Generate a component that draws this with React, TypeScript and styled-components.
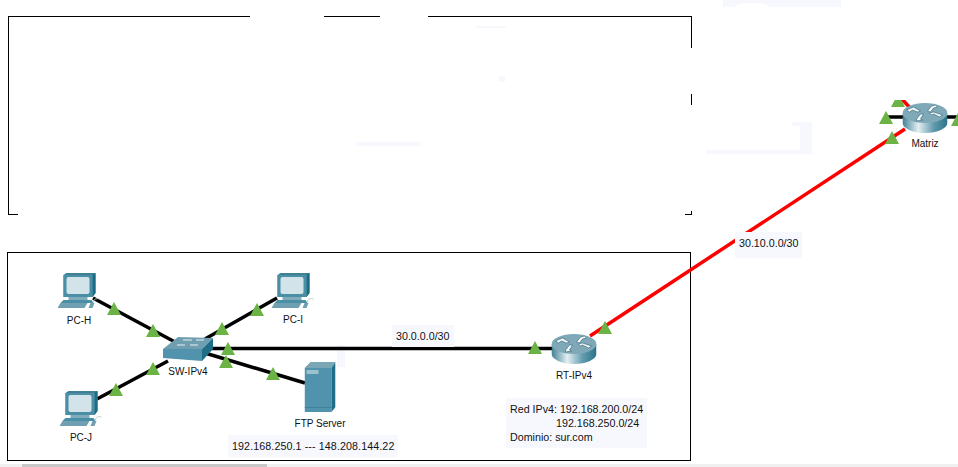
import { useId } from "react"
import styled, { createGlobalStyle } from "styled-components"

const GlobalStyle = createGlobalStyle`
    html, body {
        margin: 0;
        padding: 0;
        background: #fff;
        overflow: hidden;
    }
    body {
        font-family: "Liberation Sans", Arial, sans-serif;
        font-size: 10.7px;
        color: #111;
    }
`

const links = [
    { x1: 93, y1: 298, x2: 175, y2: 342, color: "#000" },
    { x1: 277, y1: 298, x2: 205, y2: 339, color: "#000" },
    { x1: 97, y1: 399, x2: 168, y2: 361, color: "#000" },
    { x1: 210, y1: 348.5, x2: 555, y2: 348.5, color: "#000" },
    { x1: 205, y1: 353, x2: 305, y2: 383, color: "#000" },
    { x1: 590, y1: 336, x2: 905, y2: 129, color: "#f00" },
    { x1: 888, y1: 117, x2: 905, y2: 117, color: "#000" },
    { x1: 945, y1: 117, x2: 958, y2: 117, color: "#000" },
    { x1: 900, y1: 97, x2: 912, y2: 110, color: "#f00" },
]

// x is the middle of the triangle, y its top
const lights = [
    [114, 302], [153, 324], [257, 303], [222, 322], [228, 342], [226, 355],
    [273, 367], [153, 362], [116, 383], [535, 341], [605, 321],
    [898, 94], [886, 111], [892, 131], [958, 113],
]

const smudges = [
    { x: 723, y: 0, w: 118, h: 7, c: "#f7f8fe" },
    { x: 735, y: 3, w: 34, h: 8, c: "#fff", round: true },
    { x: 706, y: 150, w: 106, h: 4, c: "#f7f8fe" },
    { x: 800, y: 122, w: 12, h: 32, c: "#f7f8fe" },
    { x: 792, y: 122, w: 10, h: 4, c: "#f7f8fe" },
    { x: 357, y: 142, w: 63, h: 4, c: "#f7f8fe" },
    { x: 476, y: 26, w: 30, h: 2, c: "#f7f8fe" },
    { x: 499, y: 76, w: 6, h: 6, c: "#f7f8fe" },
    { x: 337, y: 345, w: 8, h: 22, c: "#f7f8fe" },
    // parts of the first region that got painted over
    { x: 250, y: 14, w: 74, h: 5, c: "#fff" },
    { x: 380, y: 14, w: 48, h: 5, c: "#fff" },
    { x: 690, y: 48, w: 4, h: 46, c: "#fff" },
    { x: 690, y: 105, w: 4, h: 106, c: "#fff" },
    { x: 18, y: 213, w: 667, h: 5, c: "#fff" },
]

function PcIcon() {
    return (
        <svg width="43" height="35" viewBox="0 0 43 35">
            <polygon points="6,2 9,0 38,0 38,20 35,24 6,24" fill="#3f8095" />
            <polygon points="35,2 38,0 38,20 35,24" fill="#1d6c85" />
            <rect x="6" y="2" width="29" height="22" fill="#4b8fa6" />
            <rect x="9" y="4" width="23" height="17" rx="2" fill="#d3e3ea" />
            <rect x="11" y="24" width="19" height="3" fill="#7fabbb" />
            <polygon points="6,27 34,27 36,30 3,30" fill="#4b8fa6" />
            <polygon points="3,30 30,30 27,35 0,35" fill="#6f9fb1" />
            <polygon points="31,35 33,30 37,30 35,35" fill="#6f9fb1" />
            <path d="M36 29c0-3 3-4 6-3" fill="none" stroke="#b9c9d0" />
        </svg>
    )
}

function SwitchIcon() {
    return (
        <svg width="50" height="24" viewBox="0 0 50 24">
            <polygon points="0,12 15,0 50,1 39,12" fill="#6f9eb0" />
            <polygon points="0,12 39,12 39,24 0,21" fill="#5193ac" />
            <polygon points="39,12 50,1 50,12 39,24" fill="#1f6e87" />
            <g stroke="#e8f1f4" strokeWidth="1.2" fill="none">
                <path d="M20 3h9M33 3h8M14 8h8M27 8h8" />
            </g>
        </svg>
    )
}

function ServerIcon() {
    return (
        <svg width="31" height="50" viewBox="0 0 31 50">
            <polygon points="0,6 6,0 31,0 27,6" fill="#7ba6b6" />
            <rect x="0" y="6" width="27" height="44" fill="#5193ac" />
            <polygon points="27,6 31,0 31,45 27,50" fill="#1d6f87" />
            <rect x="2" y="8" width="12" height="4" fill="#9cc1cf" />
            <rect x="0" y="45" width="27" height="1" fill="#3f8199" />
        </svg>
    )
}

function RouterIcon() {
    const id = useId()
    return (
        <svg width="45" height="30" viewBox="0 0 45 30">
            <defs>
                <linearGradient id={id}>
                    <stop offset="0" stopColor="#3e8095" />
                    <stop offset="0.35" stopColor="#e4eff2" />
                    <stop offset="0.7" stopColor="#5f9aac" />
                    <stop offset="1" stopColor="#2b7389" />
                </linearGradient>
            </defs>
            <path d="M0 10v10c0 5 10 10 22.500 10s22.500-5 22.500-10v-10z" fill={`url(#${id})`} />
            <ellipse cx="22.500" cy="10" rx="22.500" ry="10" fill="#7fa9b8" />
            <g fill="#f2f7f8" stroke="#174f62" strokeWidth="0.5">
                <polygon points="4,7 11,4 18,8 15,9 10,7 7,9" />
                <polygon points="25,8 29,3 33,2 35,4 31,5 28,9" />
                <polygon points="27,10 31,9 40,12 37,14 31,11 29,12" />
                <polygon points="14,16 18,11 21,11 18,16 20,17 14,18" />
            </g>
        </svg>
    )
}

export default function App() {
    return (
        <Canvas>
            <GlobalStyle />

            <Region $x={8} $y={16} $w={684} $h={199} />
            <Region $x={7} $y={252} $w={684} $h={209} />

            {smudges.map(s => (
                <Smudge key={`${s.x}-${s.y}`} $x={s.x} $y={s.y} $w={s.w} $h={s.h} $color={s.c} $round={s.round} />
            ))}

            <LinkLayer width="958" height="467">
                {links.map(l => (
                    <line key={`${l.x1}-${l.y1}`} x1={l.x1} y1={l.y1} x2={l.x2} y2={l.y2} stroke={l.color} strokeWidth="3.5" />
                ))}
            </LinkLayer>

            <LinkNote $x={392} $y={325}>30.0.0.0/30</LinkNote>
            <LinkNote $x={735} $y={232} $tall>30.10.0.0/30</LinkNote>
            <LinkNote $x={228} $y={435} $spread>192.168.250.1 --- 148.208.144.22</LinkNote>
            <LinkNote $x={506} $y={398}>
                <div>Red IPv4: 192.168.200.0/24</div>
                <IndentedLine>192.168.250.0/24</IndentedLine>
                <div>Dominio: sur.com</div>
            </LinkNote>

            <Device $x={79} $y={273} $gap={7}><PcIcon /><DeviceName>PC-H</DeviceName></Device>
            <Device $x={293} $y={273} $gap={6}><PcIcon /><DeviceName>PC-I</DeviceName></Device>
            <Device $x={81} $y={391} $gap={6}><PcIcon /><DeviceName>PC-J</DeviceName></Device>
            <Device $x={188} $y={337} $gap={5}><SwitchIcon /><DeviceName>SW-IPv4</DeviceName></Device>
            <Device $x={320} $y={362} $gap={6}><ServerIcon /><DeviceName>FTP Server</DeviceName></Device>
            <Device $x={574} $y={334} $gap={6}><RouterIcon /><DeviceName>RT-IPv4</DeviceName></Device>
            <Device $x={925} $y={103} $gap={5}><RouterIcon /><DeviceName>Matriz</DeviceName></Device>

            {lights.map(([x, y]) => (
                <Light key={`${x}-${y}`} $x={x} $y={y} />
            ))}
            {/* the first triangle of Matriz and its link are cut off flat */}
            <Smudge $x={890} $y={90} $w={20} $h={10} $color="#fff" />

            <ScrollTrack>
                <ScrollThumb />
            </ScrollTrack>
        </Canvas>
    )
}

const Canvas = styled.div`
    position: relative;
    width: 958px;
    height: 467px;
    overflow: hidden;
    background: #fff;
`

const Region = styled.div<{ $x: number, $y: number, $w: number, $h: number }>`
    position: absolute;
    left: ${p => p.$x}px;
    top: ${p => p.$y}px;
    width: ${p => p.$w}px;
    height: ${p => p.$h}px;
    box-sizing: border-box;
    border: 1px solid #000;
`

const Smudge = styled.div<{ $x: number, $y: number, $w: number, $h: number, $color: string, $round?: boolean }>`
    position: absolute;
    left: ${p => p.$x}px;
    top: ${p => p.$y}px;
    width: ${p => p.$w}px;
    height: ${p => p.$h}px;
    background: ${p => p.$color};
    border-radius: ${p => p.$round ? "50%" : "0"};
`

const LinkLayer = styled.svg`
    position: absolute;
    left: 0;
    top: 0;
`

const LinkNote = styled.div<{ $x: number, $y: number, $tall?: boolean, $spread?: boolean }>`
    position: absolute;
    left: ${p => p.$x}px;
    top: ${p => p.$y}px;
    padding: 4px 4px ${p => p.$tall ? "8px" : "4px"};
    background: #f7f8fe;
    line-height: 14px;
    letter-spacing: ${p => p.$spread ? "0.1px" : "0"};
    white-space: nowrap;
`

const IndentedLine = styled.div`
    padding-left: 46px;
`

const Device = styled.div<{ $x: number, $y: number, $gap: number }>`
    position: absolute;
    left: ${p => p.$x}px;
    top: ${p => p.$y}px;
    transform: translateX(-50%);
    display: flex;
    flex-direction: column;
    align-items: center;
    gap: ${p => p.$gap}px;

    svg {
        display: block;
    }
`

const DeviceName = styled.span`
    font-size: 10px;
    line-height: 12px;
    white-space: nowrap;
`

const Light = styled.div<{ $x: number, $y: number }>`
    position: absolute;
    left: ${p => p.$x - 7}px;
    top: ${p => p.$y}px;
    width: 14px;
    height: 13px;
    background: #6ab344;
    clip-path: polygon(50% 0, 100% 100%, 0 100%);
`

const ScrollTrack = styled.div`
    position: absolute;
    left: 0;
    right: 0;
    bottom: 0;
    height: 3px;
    background: #f0f0f0;
`

const ScrollThumb = styled.div`
    margin-left: 22px;
    width: 245px;
    height: 100%;
    background: #c8c8c8;
`
